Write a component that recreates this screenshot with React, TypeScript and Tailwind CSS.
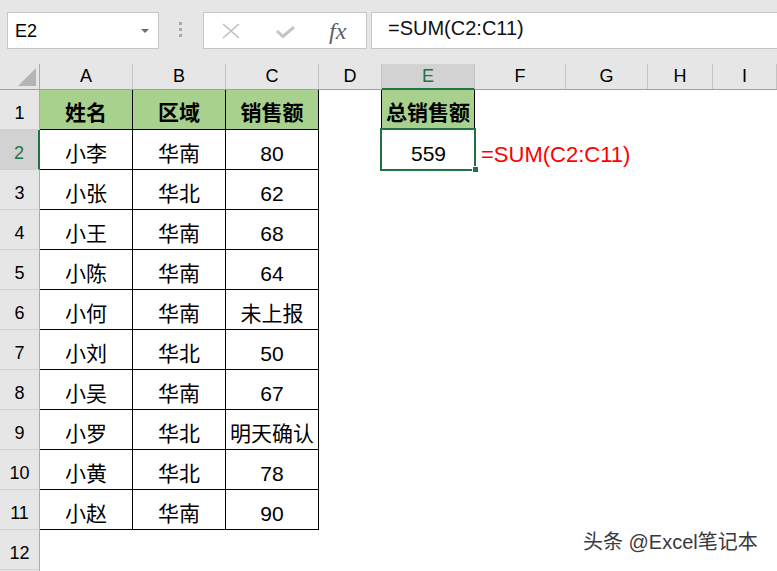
import React from "react";

const colWidths = [93, 93, 93, 63, 93, 91, 82, 65];
const letters = ["A", "B", "C", "D", "E", "F", "G", "H", "I"];

const data: [string, string, string][] = [
  ["小李", "华南", "80"],
  ["小张", "华北", "62"],
  ["小王", "华南", "68"],
  ["小陈", "华南", "64"],
  ["小何", "华南", "未上报"],
  ["小刘", "华北", "50"],
  ["小吴", "华南", "67"],
  ["小罗", "华北", "明天确认"],
  ["小黄", "华北", "78"],
  ["小赵", "华南", "90"],
];

const cellFont = { fontFamily: '"Liberation Sans", "Noto Sans CJK SC", sans-serif' };

function Toolbar() {
  return (
    <div className="flex h-[64px] items-start bg-[#e6e6e6] pl-[7px] pt-[12px]">
      <div className="flex h-[37px] w-[152px] items-center justify-between border border-[#c6c6c6] bg-white pl-[7px] pr-[9px]">
        <span className="text-[18px] leading-none text-black" style={{ fontFamily: '"Liberation Sans", sans-serif' }}>
          E2
        </span>
        <svg width="8" height="4" viewBox="0 0 8 4">
          <polygon points="0,0 8,0 4,4" fill="#6b6b6b" />
        </svg>
      </div>
      <div className="ml-[20px] mt-[10px] flex flex-col gap-[3px]">
        <div className="h-[3px] w-[3px] bg-[#a8a8a8]" />
        <div className="h-[3px] w-[3px] bg-[#a8a8a8]" />
        <div className="h-[3px] w-[3px] bg-[#a8a8a8]" />
      </div>
      <div className="ml-[21px] flex h-[37px] w-[164px] items-center border border-[#c6c6c6] bg-white">
        <svg className="ml-[18px]" width="18" height="16" viewBox="0 0 18 16">
          <path d="M1 1 L17 15 M17 1 L1 15" stroke="#bdbdbd" strokeWidth="1.6" fill="none" />
        </svg>
        <svg className="ml-[36px] mt-[2px]" width="19" height="12" viewBox="0 0 19 12">
          <path d="M1 5 L7 10.5 L18 1" stroke="#c4c4c4" strokeWidth="3" fill="none" />
        </svg>
        <span
          className="ml-[34px] text-[24px] italic leading-none text-[#5f5f5f]"
          style={{ fontFamily: '"Liberation Serif", serif' }}
        >
          fx
        </span>
      </div>
      <div className="ml-[4px] flex h-[37px] flex-1 items-center border border-r-0 border-[#c6c6c6] bg-white pb-[5px] pl-[16px]">
        <span className="text-[20px] leading-none text-[#111]" style={{ fontFamily: '"Liberation Sans", sans-serif' }}>
          =SUM(C2:C11)
        </span>
      </div>
    </div>
  );
}

function ColumnHeader() {
  return (
    <div
      className="flex h-[26px] border-b border-[#a0a0a0] bg-[#e6e6e6] text-[18px] text-black"
      style={{ fontFamily: '"Liberation Sans", sans-serif' }}
    >
      <div className="relative w-[40px] shrink-0 border-r border-[#ababab]">
        <svg className="absolute left-[18px] top-[4px]" width="18" height="18" viewBox="0 0 18 18">
          <polygon points="18,0 18,18 0,18" fill="#b4b4b4" />
        </svg>
      </div>
      {letters.map((l, i) => {
        const w = colWidths[i];
        const sel = l === "E";
        return (
          <div
            key={l}
            className={
              (w ? "shrink-0 " : "flex-1 ") +
              "flex items-center justify-center border-r border-[#c4c4c4] " +
              (sel ? "-mb-[1px] border-b-2 border-b-[#217346] bg-[#d2d2d2] text-[#217346]" : "")
            }
            style={w ? { width: w } : undefined}
          >
            {l}
          </div>
        );
      })}
    </div>
  );
}

function RowHead({ n }: { n: number }) {
  const sel = n === 2;
  return (
    <div
      className={
        "flex w-[40px] shrink-0 items-center justify-center border-b border-[#d0d0d0] pt-[8px] text-[18px] " +
        (sel
          ? "border-r-2 border-r-[#217346] bg-[#d2d2d2] text-[#217346]"
          : "border-r border-r-[#ababab] bg-[#e6e6e6] text-black")
      }
      style={{ fontFamily: '"Liberation Sans", sans-serif' }}
    >
      {n}
    </div>
  );
}

function Cell({ w, children, className = "" }: { w?: number; children?: React.ReactNode; className?: string }) {
  return (
    <div
      className={(w ? "shrink-0 " : "flex-1 ") + "relative flex items-center justify-center " + className}
      style={w ? { width: w } : undefined}
    >
      {children}
    </div>
  );
}

const tableCell = "border-r border-b border-black";

export default function App() {
  return (
    <div className="relative h-[571px] w-[777px] overflow-hidden bg-white" style={cellFont}>
      <Toolbar />
      <ColumnHeader />
      {/* Row 1 */}
      <div className="flex h-[40px] text-[21px] text-black">
        <RowHead n={1} />
        <Cell w={93} className={tableCell + " bg-[#a9d18e] pt-[6px] font-bold"}>姓名</Cell>
        <Cell w={93} className={tableCell + " bg-[#a9d18e] pt-[6px] font-bold"}>区域</Cell>
        <Cell w={93} className={tableCell + " bg-[#a9d18e] pt-[6px] font-bold"}>销售额</Cell>
        <Cell w={63} className="border-r border-black" />
        <Cell w={93} className="border-r border-black bg-[#a9d18e] pt-[6px] font-bold">总销售额</Cell>
        <Cell w={91} />
        <Cell w={82} />
        <Cell w={65} />
        <Cell />
      </div>
      {data.map((r, i) => {
        const n = i + 2;
        return (
          <div key={n} className="flex h-[40px] text-[21px] text-black">
            <RowHead n={n} />
            <Cell w={93} className={tableCell + " pt-[8px]"}>{r[0]}</Cell>
            <Cell w={93} className={tableCell + " pt-[8px]"}>{r[1]}</Cell>
            <Cell w={93} className={tableCell + " pt-[8px] whitespace-nowrap"}>{r[2]}</Cell>
            <Cell w={63} />
            {n === 2 ? (
              <Cell w={93} className="pt-[8px]">
                559
                <div className="absolute -bottom-[1px] -left-[2px] -right-[1px] -top-[2px] border-2 border-[#217346]" />
                <div className="absolute -bottom-[3px] -right-[4px] h-[7px] w-[7px] border border-white bg-[#217346]" />
              </Cell>
            ) : (
              <Cell w={93} />
            )}
            {n === 2 ? (
              <Cell w={91} className="justify-start overflow-visible pl-[6px] pt-[8px]">
                <span className="z-10 whitespace-nowrap text-[22px] text-[#ff0000]">=SUM(C2:C11)</span>
              </Cell>
            ) : (
              <Cell w={91} />
            )}
            <Cell w={82} />
            <Cell w={65} />
            <Cell />
          </div>
        );
      })}
      {/* Row 12 */}
      <div className="flex h-[40px]">
        <RowHead n={12} />
        <Cell />
      </div>
      <div className="flex h-[10px]">
        <div className="w-[40px] shrink-0 border-r border-[#ababab] bg-[#e6e6e6]" />
      </div>
      <div
        className="absolute left-[583px] top-[530px] whitespace-nowrap text-[20px] leading-[24px] text-[#3a3a3a]"
        style={{ fontFamily: '"Liberation Sans", "Noto Sans CJK SC", sans-serif' }}
      >
        头条 @Excel笔记本
      </div>
    </div>
  );
}
